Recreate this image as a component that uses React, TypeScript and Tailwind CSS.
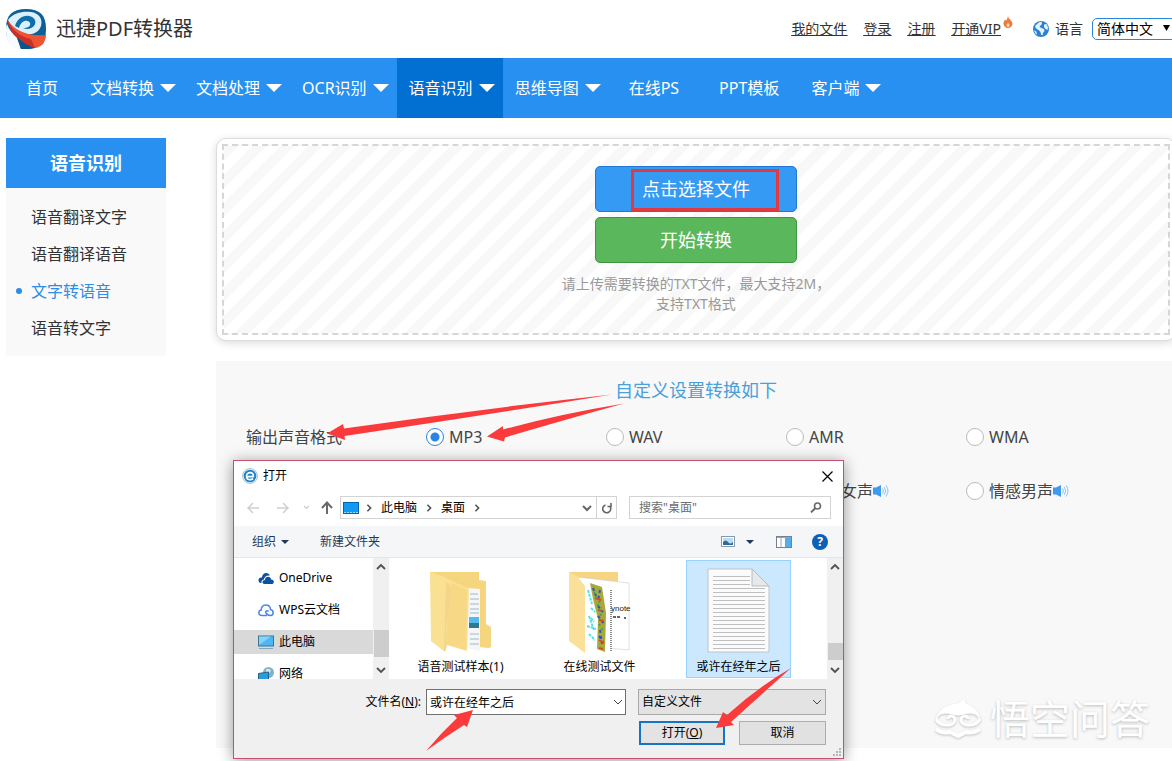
import React from "react";

function Caret() {
  return (
    <svg className="ml-[6px] mr-2 h-2 w-4 shrink-0" viewBox="0 0 16 8" fill="#fff" aria-hidden="true">
      <path d="M0 0h16L8 8z" />
    </svg>
  );
}

function Logo() {
  return (
    <svg className="h-10 w-10 shrink-0" viewBox="0 0 40 40" aria-hidden="true">
      <path d="M20 0C34 0 40 6 40 20S34 40 20 40 0 34 0 20 6 0 20 0z" fill="#0d5f97" />
      <path d="M2 11C8 3 18 2 25 3c8 1 12 7 10 14-2 6-8 9-14 8C12 24 5 18 2 11z" fill="#dcf0fc" />
      <path d="M9 17c2-7 8-11 14-10 6 1 8 6 5 10-3 3-7 4-11 2 5 0 8-2 7-5-2-4-9-3-11 5z" fill="#0d6fab" />
      <path d="M1 10c5 9 18 18 39 16 0 4-2 8-4 10-3 2-5 3-7 3C17 36 5 26 1 10z" fill="#ec5433" />
      <path d="M1 10c4 10 13 18 24 20l4 9C17 36 4 27 1 10z" fill="#c9302a" />
      <path d="M1 15c2 6 6 10 10 14l4 11C6 39 0 34 0 22c0-3 0-5 1-7z" fill="#f8fcff" />
      <path d="M11 28c5 5 11 9 18 11-4 1-9 1-14 1z" fill="#0a568c" />
    </svg>
  );
}

function Flame() {
  return (
    <svg className="absolute left-full top-[-3px] ml-[2px] h-3 w-[10px]" viewBox="0 0 10 12" aria-hidden="true">
      <path d="M5 0c0 3 4 4 4.500 7.500C9.500 10 7.500 12 5 12S.5 10 .5 7.500C.5 5.500 1.500 4.500 2 3.500l1 1.300C4 3.500 4.500 2 5 0z" fill="#ef7a3a" />
      <path d="M5 6.500c0 1 1.500 1.500 1.500 2.800C6.500 10.300 5.800 11 5 11s-1.500-.7-1.500-1.700C3.500 8 5 7.800 5 6.500z" fill="#fde3d2" />
    </svg>
  );
}

function Globe() {
  return (
    <svg className="h-4 w-4" viewBox="0 0 16 16" aria-hidden="true">
      <circle cx="8" cy="8" r="8" fill="#2b80d2" />
      <path d="M6 1.200 8.500.8 9 3 7.500 4.500 6.500 6l2 1 2.500 1 .5 2-1.500 2-.5 2.500-1.500-1L7.500 11l-2-2L3 7.500 2 5z" fill="#e4f2fd" />
      <path d="M11 3.500l2.500-.5 1.500 3.500-.5 2.500-2-1-1.500-2z" fill="#e4f2fd" />
      <path d="M1 9.500l2 .5 1 3-1 .5z" fill="#e4f2fd" />
    </svg>
  );
}

function Speaker() {
  return (
    <svg className="h-4 w-4" viewBox="0 0 16 16" aria-hidden="true">
      <path d="M0 4.500h3L8 2v12l-5-2.500H0z" fill="#3c9af0" />
      <path d="M9.500 5.500q2 2.500 0 5M11.200 4q3 4 0 8M13 2.500q4 5.500 0 11" fill="none" stroke="#8cc4f6" strokeWidth="1" />
    </svg>
  );
}

const navItems = [
  { text: "首页" },
  { text: "文档转换", menu: true },
  { text: "文档处理", menu: true },
  { text: "OCR识别", menu: true },
  { text: "语音识别", menu: true, active: true },
  { text: "思维导图", menu: true },
  { text: "在线PS" },
  { text: "PPT模板" },
  { text: "客户端", menu: true },
];

function Header() {
  return (
    <header className="flex h-[58px] items-center pl-[6px]">
      <Logo />
      <h1 className="ml-[10px] text-[20px] leading-7 text-[#333]">迅捷PDF转换器</h1>
      <div className="-mr-1 ml-auto flex shrink-0 items-center text-[14px] leading-5 text-[#333]">
        <nav className="flex gap-4 underline">
          <a href="#files">我的文件</a>
          <a href="#login">登录</a>
          <a href="#register">注册</a>
          <a href="#vip" className="relative mr-8">
            开通VIP
            <Flame />
          </a>
        </nav>
        <Globe />
        <label htmlFor="lang" className="ml-[6px] mr-[9px]">语言</label>
        <div className="relative">
          <select
            id="lang"
            className="block h-[22px] w-[84px] appearance-none rounded-[5px] border border-[#2a86d8] bg-white pl-1 text-[14px] leading-5 text-black"
          >
            <option>简体中文</option>
          </select>
          <svg className="pointer-events-none absolute right-[6px] top-[7px] h-[6px] w-[7px]" viewBox="0 0 7 6" aria-hidden="true">
            <path d="M0 0h7L3.500 6z" />
          </svg>
        </div>
      </div>
    </header>
  );
}

function MainNav() {
  return (
    <nav className="flex h-[60px] bg-[#2790f0] pl-[6px] text-[16px] text-white">
      {navItems.map((item) => (
        <a
          key={item.text}
          href="#nav"
          className={`flex items-center whitespace-nowrap ${item.menu ? "pl-3" : "px-5"} ${item.active ? "bg-[#026fd2]" : ""}`}
        >
          {item.text}
          {item.menu && <Caret />}
        </a>
      ))}
    </nav>
  );
}

function Sidebar() {
  const items = ["语音翻译文字", "语音翻译语音", "文字转语音", "语音转文字"];
  return (
    <aside className="w-40 shrink-0 self-start bg-[#f9f9f9]">
      <h2 className="flex h-[50px] items-center justify-center bg-[#2790f0] text-[18px] font-bold text-white">语音识别</h2>
      <ul className="py-[10px] text-[16px]">
        {items.map((t, i) => (
          <li key={t}>
            <a href="#tool" className={`flex h-[37px] items-center ${i === 2 ? "text-[#2f8be6]" : "text-[#333]"}`}>
              <span className={`ml-[10px] mr-[9px] h-[6px] w-[6px] rounded-full ${i === 2 ? "bg-[#2f8be6]" : ""}`} />
              {t}
            </a>
          </li>
        ))}
      </ul>
    </aside>
  );
}

function UploadBox() {
  return (
    <section className="rounded-[10px] border border-[#ddd] bg-white p-[5px] shadow-[0_2px_8px_rgba(0,0,0,0.15)]">
      <div className="flex h-[191px] flex-col items-center border-2 border-dashed border-[#d6d6d6] bg-[repeating-linear-gradient(135deg,#f8f8f8_0px,#f8f8f8_10px,#fff_10px,#fff_20px)] pt-5">
        <button className="relative h-[46px] w-[202px] rounded-[5px] border border-[#1f78d8] bg-[#359af4] text-[18px] text-white">
          点击选择文件
          <span className="absolute left-[35px] top-[2px] h-[42px] w-[148px] border-[3px] border-[#e0393f]" />
        </button>
        <button className="mt-[5px] h-[46px] w-[202px] rounded-[5px] border border-[#3f9440] bg-[#5bb75b] text-[18px] text-white">
          开始转换
        </button>
        <p className="mt-[11px] text-center text-[14px] leading-5 text-[#999]">
          请上传需要转换的TXT文件，最大支持2M，
          <br />
          支持TXT格式
        </p>
      </div>
    </section>
  );
}

function RadioOption(props: { name: string; label: string; checked?: boolean; voice?: boolean }) {
  return (
    <label className="flex w-[180px] items-center whitespace-nowrap">
      <input
        type="radio"
        name={props.name}
        defaultChecked={props.checked}
        className="mr-[5px] h-[18px] w-[18px] shrink-0 appearance-none rounded-full border border-[#bbb] bg-white checked:border-[#2b84e0] checked:bg-[radial-gradient(circle,#2b84e0_4px,white_5px)]"
      />
      {props.label}
      {props.voice && <Speaker />}
    </label>
  );
}

function Settings() {
  return (
    <section className="mt-5 h-[387px] bg-[#f8f8f8] pl-[30px] text-[16px] leading-6 text-[#444]">
      <h3 className="-ml-[30px] pt-[17px] text-center text-[18px] leading-6 text-[#4aa0d8]">自定义设置转换如下</h3>
      <div className="mt-[23px] flex">
        <span className="w-[180px] shrink-0">输出声音格式</span>
        <RadioOption name="fmt" label="MP3" checked />
        <RadioOption name="fmt" label="WAV" />
        <RadioOption name="fmt" label="AMR" />
        <RadioOption name="fmt" label="WMA" />
      </div>
      <div className="mt-[30px] flex justify-end pr-[30px]">
        <span className="flex w-[125px] items-center">
          女声
          <Speaker />
        </span>
        <RadioOption name="voice" label="情感男声" voice />
      </div>
    </section>
  );
}

function Chevron({ dir, className }: { dir: "up" | "down" | "right"; className: string }) {
  const d = { up: "M1 7l4-4 4 4", down: "M1 3l4 4 4-4", right: "M3 1l4 4-4 4" }[dir];
  return (
    <svg className={className} viewBox="0 0 10 10" fill="none" stroke="currentColor" aria-hidden="true">
      <path d={d} />
    </svg>
  );
}

function TitleBar() {
  return (
    <div className="flex h-[30px] items-center pl-2 pr-[10px]">
      <svg className="h-4 w-4" viewBox="0 0 16 16" aria-hidden="true">
        <circle cx="8" cy="8" r="7.500" fill="#eaf5fc" stroke="#9db4c6" strokeWidth=".8" />
        <circle cx="8" cy="8" r="6.300" fill="#1b83cb" />
        <path d="M11.800 8.600H5M11.500 8.500C11.500 6 10 4.600 8.100 4.600 6 4.600 4.500 6 4.500 8.200c0 2.100 1.500 3.400 3.700 3.400 1.100 0 2.100-.3 2.900-.8" fill="none" stroke="#fff" strokeWidth="1.600" />
      </svg>
      <h2 className="ml-[5px] text-[12px] text-black">打开</h2>
      <button aria-label="关闭" className="ml-auto">
        <svg className="h-[11px] w-[11px]" viewBox="0 0 11 11" stroke="#000" strokeWidth="1.200" aria-hidden="true">
          <path d="M.5.5l10 10M10.500.5l-10 10" />
        </svg>
      </button>
    </div>
  );
}

function AddressBar() {
  return (
    <div className="mt-[5px] flex h-[23px] items-center pl-3 pr-3">
      <svg className="h-4 w-[88px] shrink-0" viewBox="0 0 88 16" fill="none" aria-hidden="true">
        <path d="M13 8H2M7 3L2 8l5 5M31 8h11M37 3l5 5-5 5" stroke="#d0d0d0" strokeWidth="1.500" />
        <path d="M58 6l2.500 2.500L63 6" stroke="#ccc" strokeWidth="1.200" />
        <path d="M81 14V3M76 8l5-5.500L86 8" stroke="#6a6a6a" strokeWidth="2" />
      </svg>
      <div className="ml-[6px] flex h-[23px] w-[277px] items-center border border-[#d3d3d3] text-[12px] text-black">
        <svg className="ml-[2px] mr-[6px] h-3 w-4" viewBox="0 0 16 12" aria-hidden="true">
          <rect x=".5" y=".5" width="15" height="11" fill="#0f9bf5" stroke="#0a62a8" />
          <path d="M1 10.500h14" stroke="#9fd6fb" strokeDasharray="2 1" />
        </svg>
        <Chevron dir="right" className="mr-2 h-2 w-2 text-[#555] stroke-2" />
        <span>此电脑</span>
        <Chevron dir="right" className="mx-2 h-2 w-2 text-[#555] stroke-2" />
        <span>桌面</span>
        <Chevron dir="right" className="mx-2 h-2 w-2 text-[#555] stroke-2" />
        <Chevron dir="down" className="ml-auto mr-1 h-[10px] w-[10px] text-[#666] stroke-2" />
        <button aria-label="刷新" className="flex h-full w-5 items-center justify-center border-l border-[#d3d3d3]">
          <svg className="h-3 w-[10px]" viewBox="0 0 10 12" fill="none" stroke="#666" strokeWidth="1.600" aria-hidden="true">
            <path d="M3.500 3A4 4 0 1 0 8 4.500M9 1v3.500H5.500" />
          </svg>
        </button>
      </div>
      <div className="relative ml-3 flex h-[23px] flex-1 items-center border border-[#d3d3d3]">
        <input
          aria-label="搜索"
          placeholder={'搜索"桌面"'}
          className="h-full w-full pl-[9px] text-[12px] outline-none placeholder:text-[#6d6d6d]"
        />
        <svg className="absolute right-2 h-[11px] w-[12px]" viewBox="0 0 12 11" fill="none" stroke="#6a6a6a" aria-hidden="true">
          <circle cx="7.500" cy="4" r="3" strokeWidth="1.600" />
          <path d="M5.200 6.200L1 10.400" strokeWidth="2" />
        </svg>
      </div>
    </div>
  );
}

function Toolbar() {
  return (
    <div className="mt-[7px] flex h-8 items-center border-b border-[#e3e6ea] bg-[#f5f6f7] pl-[18px] pr-[15px] text-[12px] text-[#1e395b]">
      <button className="flex items-center">
        组织
        <svg className="ml-[5px] h-1 w-2" viewBox="0 0 8 4" aria-hidden="true">
          <path d="M0 0h8L4 4z" fill="#1e395b" />
        </svg>
      </button>
      <button className="ml-[31px]">新建文件夹</button>
      <button aria-label="视图" className="ml-auto flex items-center">
        <svg className="h-[11px] w-[14px]" viewBox="0 0 14 11" aria-hidden="true">
          <rect x=".5" y=".5" width="13" height="10" fill="#fff" stroke="#8a97a5" />
          <rect x="2" y="2" width="10" height="7" fill="#b9dcf5" />
          <path d="M2 6q3-3 5 0t5 0v3H2z" fill="#2d6c9d" />
        </svg>
        <svg className="ml-[11px] h-1 w-2" viewBox="0 0 8 4" aria-hidden="true">
          <path d="M0 0h8L4 4z" fill="#1e395b" />
        </svg>
      </button>
      <button aria-label="预览窗格" className="ml-[22px]">
        <svg className="h-3 w-4" viewBox="0 0 16 12" aria-hidden="true">
          <rect x=".5" y=".5" width="15" height="11" fill="#fff" stroke="#75818d" />
          <path d="M1 1.500h14M5 1v10" stroke="#98a4b0" />
          <rect x="9" y="2" width="6" height="9" fill="#56aee8" />
        </svg>
      </button>
      <button aria-label="帮助" className="ml-5 flex h-4 w-4 items-center justify-center rounded-full bg-[#0d5fb8] text-[12px] font-bold leading-4 text-white">
        ?
      </button>
    </div>
  );
}

function Scrollbar({ space, thumb }: { space: string; thumb: string }) {
  return (
    <div className="flex w-4 shrink-0 flex-col items-center bg-[#f0f0f0] py-1 text-[#505050]">
      <Chevron dir="up" className="h-[10px] w-[10px] stroke-[1.800]" />
      <div className={space} />
      <div className={`w-[15px] bg-[#cdcdcd] ${thumb}`} />
      <Chevron dir="down" className="mt-auto h-[10px] w-[10px] stroke-[1.800]" />
    </div>
  );
}

const treeIcons: Record<string, React.ReactNode> = {
  OneDrive: (
    <path d="M1 11c-1.500-3 .5-5 3-4.500C4 2 9.500 0 12 4.500 8.500 4 6 6 6 8.500c-2 0-3 2-2.500 3.500C2.500 12 1.500 11.800 1 11zM6.500 13C3.500 12.500 4 9 7 9c0-4 5.500-4.500 6.200-.5 3 0 3.500 4 1 4.500z" fill="#0d4fa3" />
  ),
  WPS云文档: (
    <path d="M9 12.500H4C0 12.500 0 7.500 3.200 7 3.500.5 12 .5 12.500 6.500c3.500.5 3.500 5.800.2 6-2 0-3.700-1-4.700-2.500-1-1.700 1-3 2.500-1.500" fill="none" stroke="#4a83f0" strokeWidth="1.500" />
  ),
  此电脑: (
    <g>
      <rect x=".5" y="1" width="15" height="10" fill="#4cb8f3" stroke="#3d7290" />
      <path d="M1 10L13 1.500H1z" fill="#86d3f9" />
      <path d="M1 13.500h14" stroke="#7fa9c2" />
    </g>
  ),
  网络: (
    <g>
      <circle cx="10.500" cy="5.500" r="5.500" fill="#7fb2d0" />
      <path d="M8 2.500q3-2 5 1l-2 3-3-1z" fill="#d3ecdd" />
      <path d="M.5 6.500l10-1.500v7.500H.5z" fill="#2d9ad9" stroke="#1d658f" />
    </g>
  ),
};

function Folder({ variant }: { variant: "docs" | "photos" }) {
  if (variant === "docs") {
    return (
      <svg className="h-[84px] w-[66px]" viewBox="0 0 66 84" aria-hidden="true">
        <path d="M2 2h49v8l7 1v43l5 3v20l-2 1-22-2z" fill="#f5d57e" />
        <path d="M38 18l14 1v62l-14-3z" fill="#f4f6f8" />
        <path d="M42 24h8M42 29h9M42 34h9M42 39h9M42 43h9M42 64h9M42 69h9M42 74h9" stroke="#9fb8cd" />
        <rect x="41" y="47" width="10" height="6" fill="#55b9ea" />
        <rect x="41" y="53" width="10" height="5" fill="#2b7a92" />
        <path d="M2 2l12 4 27 13-2 62-21-6-1 7L3 71z" fill="#fae093" />
        <path d="M18 12l6 5-2 22-4 14 1 22-2 7-1-2z" fill="#f5d688" />
        <path d="M24 13l15 7-1 60-19-6V50l4-13z" fill="#f6d885" />
      </svg>
    );
  }
  return (
    <svg className="h-[84px] w-[66px]" viewBox="0 0 66 84" aria-hidden="true">
      <path d="M2 2h49v70H20z" fill="#f5d582" />
      <path d="M10 7l52 6v67l-44-4z" fill="#fff" stroke="#ccc" strokeWidth=".6" />
      <path d="M14 8l30 11v65l-26-4z" fill="#fff" />
      <path d="M23 13l12 4 4 26-1 39-8-3 1-30-5-20z" fill="#a9a83a" />
      <path d="M26 18l3 8M33 20l-2 12M31 36l5 6M31 46l6 8M33 60l2 14M32 66l4 6" stroke="#2e57b8" strokeWidth="2" strokeDasharray="3 3" />
      <path d="M28 28l6 2M32 50l5 1M32 70l5 3M31 40l4 1M32 78l4 1" stroke="#d94a2a" strokeWidth="2" />
      <path d="M27 22l7 12M32 54l5 8M31 34l3 12" stroke="#3da35c" strokeWidth="2" strokeDasharray="2 3" />
      <path d="M21 20l4 14M24 38l4 4M20 56l9 3M22 46l5 14M22 64l6 6M24 48l3 4" stroke="#5ae0e6" strokeWidth="2" strokeDasharray="3 1" />
      <path d="M44 20v62" stroke="#8a8a8a" strokeWidth="2" strokeDasharray="1 1" />
      <text x="44" y="41" fontSize="8" fill="#222" fontFamily="Liberation Sans, sans-serif">ynote</text>
      <path d="M46 47h8M57 48h2" stroke="#666" strokeWidth="2" strokeDasharray="3 1" />
      <path d="M2 2l8 4 8 10v67L2 71z" fill="#fbe09a" />
    </svg>
  );
}

function TextFile() {
  const lines = Array.from({ length: 19 }, (_, i) => 8 + i * 4);
  return (
    <svg className="h-[86px] w-[66px]" viewBox="0 0 66 86" aria-hidden="true">
      <path d="M2 1h44l17 17v66H2z" fill="#fbfbfb" stroke="#b9c4cc" />
      {lines.map((y) => (
        <path key={y} d={`M7 ${y + 0.5}h${y < 20 ? 37 : 52}`} stroke="#bfbfbf" />
      ))}
      <path d="M46 1v17h17z" fill="#e6e8ea" stroke="#b5bcc2" />
    </svg>
  );
}

function Browser() {
  return (
    <div className="flex h-[121px] overflow-hidden text-[12px] leading-4 text-black">
      <ul className="w-[139px] shrink-0 pt-2 leading-3">
        {["OneDrive", "WPS云文档", "此电脑", "网络"].map((t) => (
          <li key={t} className={`mb-2 flex h-6 items-center pl-6 ${t === "此电脑" ? "bg-[#d9d9d9]" : ""}`}>
            <svg className="mr-[5px] h-[14px] w-4" viewBox="0 0 16 14" aria-hidden="true">
              {treeIcons[t]}
            </svg>
            {t}
          </li>
        ))}
      </ul>
      <Scrollbar space="h-[58px]" thumb="h-[27px]" />
      <div className="flex flex-1 gap-[34px] pb-px pl-[19px] pt-[2px]">
        <figure className="flex w-[105px] flex-col items-center pt-[10px]">
          <Folder variant="docs" />
          <figcaption className="mt-[5px] whitespace-nowrap">语音测试样本(1)</figcaption>
        </figure>
        <figure className="flex w-[105px] flex-col items-center pt-[10px]">
          <Folder variant="photos" />
          <figcaption className="mt-[5px]">在线测试文件</figcaption>
        </figure>
        <figure className="flex w-[105px] flex-col items-center border border-[#99d1ff] bg-[#cce8ff] pt-[7px]">
          <TextFile />
          <figcaption className="mt-[5px]">或许在经年之后</figcaption>
        </figure>
      </div>
      <Scrollbar space="h-[71px]" thumb="h-[17px]" />
    </div>
  );
}

function Footer() {
  return (
    <div className="relative flex flex-1 flex-col items-end gap-[6px] bg-[#f0f0f0] pr-[17px] pt-[10px] text-[12px] text-black">
      <div className="flex items-center">
        <label htmlFor="fname" className="mr-[5px]">
          文件名(<u>N</u>):
        </label>
        <div className="relative">
          <input id="fname" defaultValue="或许在经年之后" className="block h-[26px] w-[200px] border border-[#707070] bg-white pl-[3px]" />
          <Chevron dir="down" className="absolute right-[3px] top-2 h-[10px] w-[10px] text-[#444]" />
        </div>
        <div className="relative ml-3">
          <select aria-label="文件类型" className="block h-[26px] w-[188px] appearance-none border border-[#a9a9a9] bg-[#e3e3e3] pl-[3px]">
            <option>自定义文件</option>
          </select>
          <Chevron dir="down" className="pointer-events-none absolute right-1 top-2 h-[10px] w-[10px] text-[#444]" />
        </div>
      </div>
      <div className="flex gap-[14px]">
        <button className="h-6 w-[86px] border-2 border-[#1874c0] bg-[#e3e3e3]">
          打开(<u>O</u>)
        </button>
        <button className="h-6 w-[87px] border border-[#adadad] bg-[#e1e1e1]">取消</button>
      </div>
      <svg className="absolute bottom-[2px] right-[2px] h-2 w-2" viewBox="0 0 8 8" fill="#b5b5b5" aria-hidden="true">
        <path d="M6 0h2v2H6zM3 3h2v2H3zM6 3h2v2H6zM0 6h2v2H0zM3 6h2v2H3zM6 6h2v2H6z" />
      </svg>
    </div>
  );
}

function OpenDialog() {
  return (
    <div
      role="dialog"
      aria-label="打开"
      className="absolute left-[233px] top-[460px] flex h-[299px] w-[611px] flex-col border border-[#c2506e] bg-white shadow-[0_2px_14px_rgba(0,0,0,0.4)]"
    >
      <TitleBar />
      <AddressBar />
      <Toolbar />
      <Browser />
      <Footer />
    </div>
  );
}

function Arrows() {
  return (
    <svg className="pointer-events-none absolute left-0 top-0 h-[761px] w-[1172px]" viewBox="0 0 1172 761" fill="#fb3b3b" aria-hidden="true">
      <path d="M612 394.500Q480 409 344 428.500L343 424 327 433.500 345 440 344.500 436Q480 416 612 394.500z" />
      <path d="M624 403.500Q560 414 503 429.500L503 426 487 436.500 504 441.500 505 437.500Q560 421 624 403.500z" />
      <path d="M426 751Q440 734 457 718L454 715 473 710 467 727 464 725Q445 737 426 751z" />
      <path d="M791 668Q758 687 727 715L723 712 716 728 734 725 731 722Q761 695 791 668z" />
    </svg>
  );
}

function Watermark() {
  return (
    <div className="absolute bottom-[18px] right-[22px] flex items-center text-white">
      <svg className="mr-2 h-[42px] w-12 drop-shadow-[0_1px_1px_rgba(0,0,0,0.22)]" viewBox="0 0 48 42" fill="none" stroke="#fff" aria-hidden="true">
        <path d="M2 21C4 12 13 7 24 6l6-4 2 4c8 3 13 8 14 15-2-4-6-6-10-6-5 0-8 2-12 2s-7-2-12-2c-4 0-8 2-10 6z" fill="#fff" />
        <path d="M2 21c4 8 18 8 19 1 0-5-7-5-7-1M46 21c-4 8-18 8-19 1 0-5 7-5 7-1" strokeWidth="3" />
        <path d="M2 31q6 5 14 3l8 4 8-4q8 2 14-3" strokeWidth="4" />
      </svg>
      <span className="text-[40px] leading-[48px] [text-shadow:0_1px_3px_rgba(0,0,0,0.25)]">悟空问答</span>
    </div>
  );
}

export default function App() {
  return (
    <div className="relative min-h-screen overflow-hidden bg-white font-['Noto_Sans','Noto_Sans_CJK_SC',sans-serif] text-[#333]">
      <Header />
      <MainNav />
      <div className="-mr-1 flex gap-[50px] pl-[6px] pt-5">
        <Sidebar />
        <main className="min-w-0 flex-1">
          <UploadBox />
          <Settings />
        </main>
      </div>
      <Watermark />
      <OpenDialog />
      <Arrows />
    </div>
  );
}
